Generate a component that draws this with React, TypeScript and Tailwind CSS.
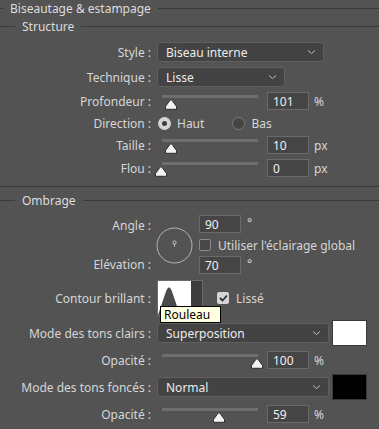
import { ReactNode } from "react"

const font = { fontFamily: '"Noto Sans", "Open Sans", sans-serif' }

function Header({ title, indent }: { title: string; indent: number }) {
  return (
    <div className="flex items-center h-4">
      <div className="h-px bg-[#3a3a3a]" style={{ width: indent }} />
      <span className="px-[7px] pt-[2px] text-[#dcdcdc] leading-[14px]">{title}</span>
      <div className="h-px flex-1 bg-[#3a3a3a]" />
    </div>
  )
}

function Row({ label, children, className = "" }: { label: string; children?: ReactNode; className?: string }) {
  return (
    <div className={`flex items-center ${className}`}>
      <div className="w-[152px] shrink-0 text-right pr-[1px] pt-[2px] leading-4 text-[#d6d6d6] whitespace-nowrap">{label}</div>
      <div className="ml-[5px] flex items-center">{children}</div>
    </div>
  )
}

function Chevron() {
  return (
    <svg width="9" height="6" viewBox="0 0 9 6" className="shrink-0">
      <path d="M1 1.5 L4.5 4.5 L8 1.5" fill="none" stroke="#bdbdbd" strokeWidth="1" />
    </svg>
  )
}

function Select({ value, width }: { value: string; width: number }) {
  return (
    <div
      className="h-5 rounded-[3px] border border-[#5f5f5f] bg-[#434343] flex items-center justify-between pl-2 pr-[7px] text-[#ececec]"
      style={{ width }}
    >
      <span className="leading-none pt-[2px]">{value}</span>
      <Chevron />
    </div>
  )
}

function Thumb() {
  return (
    <svg width="14" height="11" viewBox="0 0 14 11">
      <path d="M7 0.8 Q7.8 0.8 8.4 1.8 L12.5 7.5 V10.3 H1.5 V7.5 L5.6 1.8 Q6.2 0.8 7 0.8 Z" fill="#f2f2f2" stroke="#2e2e2e" strokeWidth="1" />
    </svg>
  )
}

function Slider({ pos }: { pos: number }) {
  return (
    <div className="relative w-[96px] h-[18px] ml-[5px]">
      <div className="absolute left-0 right-0 top-[3px] h-[3px] bg-[#6e6e6e]" />
      <div className="absolute top-[7px]" style={{ left: pos - 7 }}>
        <Thumb />
      </div>
    </div>
  )
}

function NumInput({ value }: { value: string }) {
  return (
    <div className="w-[42px] h-[18px] border border-[#6a6a6a] bg-[#454545] pl-[5px] pt-[1px] flex items-center text-[#f0f0f0] leading-none">
      {value}
    </div>
  )
}

function Radio({ on }: { on?: boolean }) {
  return on ? (
    <div className="w-[13px] h-[13px] rounded-full bg-[#d4d4d4] flex items-center justify-center">
      <div className="w-[5px] h-[5px] rounded-full bg-[#3c3c3c]" />
    </div>
  ) : (
    <div className="w-[13px] h-[13px] rounded-full bg-[#454545] border border-[#777777]" />
  )
}

function Check({ on }: { on?: boolean }) {
  return on ? (
    <div className="w-[12px] h-[12px] rounded-[2px] bg-[#d4d4d4] flex items-center justify-center">
      <svg width="9" height="8" viewBox="0 0 9 8">
        <path d="M1 4 L3.5 6.5 L8 1.5" fill="none" stroke="#2e2e2e" strokeWidth="1.8" />
      </svg>
    </div>
  ) : (
    <div className="w-[12px] h-[12px] rounded-[2px] bg-[#484848] border border-[#8a8a8a]" />
  )
}

function SliderRow({ label, pos, value, unit }: { label: string; pos: number; value: string; unit: string }) {
  return (
    <Row label={label} className="h-[18px]">
      <Slider pos={pos} />
      <div className="ml-[9px]">
        <NumInput value={value} />
      </div>
      <span className="ml-[5px] pt-[2px] leading-4 text-[#d6d6d6]">{unit}</span>
    </Row>
  )
}

export default function App() {
  return (
    <div className="w-[379px] h-[429px] bg-[#535353] text-[12px] leading-4 overflow-hidden select-none" style={font}>
      <Header title="Biseautage & estampage" indent={3} />
      <div className="mt-[2px]">
        <Header title="Structure" indent={15} />
      </div>

      <Row label="Style :" className="mt-2 h-5">
        <Select value="Biseau interne" width={167} />
      </Row>
      <Row label="Technique :" className="mt-[5px] h-5">
        <Select value="Lisse" width={128} />
      </Row>
      <div className="mt-[5px]">
        <SliderRow label="Profondeur :" pos={9} value="101" unit="%" />
      </div>
      <Row label="Direction :" className="mt-1 h-[18px]">
        <div className="ml-[1px] flex items-center">
          <Radio on />
          <span className="ml-[6px] pt-[2px] text-[#d6d6d6]">Haut</span>
          <div className="ml-[28px]">
            <Radio />
          </div>
          <span className="ml-[6px] pt-[2px] text-[#d6d6d6]">Bas</span>
        </div>
      </Row>
      <div className="mt-1">
        <SliderRow label="Taille :" pos={9} value="10" unit="px" />
      </div>
      <div className="mt-[5px]">
        <SliderRow label="Flou :" pos={-1} value="0" unit="px" />
      </div>

      <div className="mt-[9px] h-px bg-[#3a3a3a]" />
      <div className="mt-[5px]">
        <Header title="Ombrage" indent={15} />
      </div>

      <div className="mt-[7px] flex h-[60px]">
        <div className="w-[152px] shrink-0 text-right pr-[1px] text-[#d6d6d6] flex flex-col">
          <span className="h-5 leading-5 pt-[1px]">Angle :</span>
          <span className="mt-[19px] h-5 leading-5 pt-[1px]">Elévation :</span>
        </div>
        <div className="ml-[4px] w-[37px] h-[60px] flex items-center">
          <svg width="37" height="37" viewBox="0 0 37 37">
            <circle cx="18.5" cy="18.5" r="17.5" fill="none" stroke="#b4b4b4" strokeWidth="1" />
            <circle cx="18.5" cy="15.5" r="1.6" fill="none" stroke="#c8c8c8" strokeWidth="1" />
            <line x1="18.5" y1="17" x2="18.5" y2="19.5" stroke="#c8c8c8" strokeWidth="1" />
          </svg>
        </div>
        <div className="ml-[6px] flex flex-col">
          <div className="flex items-center">
            <NumInput value="90" />
            <span className="ml-[6px] -mt-[3px] text-[#d6d6d6]">°</span>
          </div>
          <div className="mt-[5px] flex items-center h-[13px]">
            <Check />
            <span className="ml-[7px] pt-[2px] text-[#d6d6d6]">Utiliser l'éclairage global</span>
          </div>
          <div className="mt-[5px] flex items-center">
            <NumInput value="70" />
            <span className="ml-[6px] -mt-[3px] text-[#d6d6d6]">°</span>
          </div>
        </div>
      </div>

      <Row label="Contour brillant :" className="mt-[5px] h-[36px]">
        <div className="relative flex items-stretch h-[36px] border border-[#6a6a6a]">
          <svg width="33" height="34" viewBox="0 0 33 34" className="bg-white">
            <path d="M0 34 L7.5 12 Q11 1 14.5 12 L22 34 Z" fill="#4a4a4a" />
          </svg>
          <div className="w-[11px] bg-[#3d3d3d] flex items-end justify-center pb-[5px]">
            <svg width="7" height="5" viewBox="0 0 7 5">
              <path d="M1 1 L3.5 3.5 L6 1" fill="none" stroke="#bdbdbd" strokeWidth="1" />
            </svg>
          </div>
          <div className="absolute left-[2px] top-[25px] z-10 w-[61px] bg-[#ffffe1] border border-black pl-[3px] h-[17px] leading-[15px] text-black whitespace-nowrap">
            Rouleau
          </div>
        </div>
        <div className="ml-[14px]">
          <Check on />
        </div>
        <span className="ml-[7px] pt-[2px] text-[#d6d6d6]">Lissé</span>
      </Row>

      <Row label="Mode des tons clairs :" className="mt-[4px] h-[26px]">
        <Select value="Superposition" width={172} />
        <div className="ml-[3px] w-[35px] h-[26px] bg-white border border-[#3a3a3a]" />
      </Row>
      <div className="mt-[5px]">
        <SliderRow label="Opacité :" pos={95} value="100" unit="%" />
      </div>
      <Row label="Mode des tons foncés :" className="mt-[5px] h-[26px]">
        <Select value="Normal" width={172} />
        <div className="ml-[3px] w-[35px] h-[26px] bg-black border border-[#3a3a3a]" />
      </Row>
      <div className="mt-[5px]">
        <SliderRow label="Opacité :" pos={57} value="59" unit="%" />
      </div>
    </div>
  )
}
